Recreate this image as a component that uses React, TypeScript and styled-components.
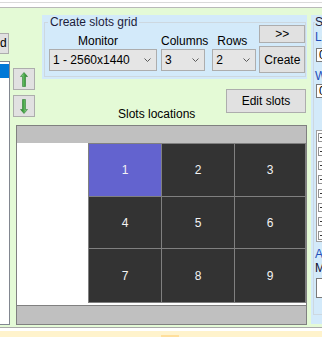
import React from "react";
import styled, { createGlobalStyle } from "styled-components";

const GlobalStyle = createGlobalStyle`
  html, body {
    margin: 0;
    padding: 0;
    background: #fff;
  }
  body {
    font-family: "Liberation Sans", Arial, sans-serif;
    font-size: 12px;
    color: #000;
  }
`;

const green = "#e4fad6";
const blue = "#d3eafa";

const Window = styled.div`
  width: 322px;
  height: 337px;
  overflow: hidden;
  background: #fff;
  display: flex;
  flex-direction: column;
`;

const TopStrip = styled.div`
  flex-shrink: 0;
  height: 4px;
  margin-top: 2px;
  border-top: 1px solid #dadada;
  border-bottom: 1px solid #b9b9b9;
`;

const Main = styled.div`
  flex-shrink: 0;
  height: 319px;
  background: ${green};
  border-bottom: 1px solid #a9a9a9;
  display: flex;
  align-items: flex-start;
  overflow: hidden;
`;

const Footer = styled.div`
  flex: 1;
  margin-top: 3px;
  background: #fff3cc;
  display: flex;
  align-items: flex-end;
`;

const FooterTab = styled.div`
  margin-left: 161px;
  width: 18px;
  height: 2px;
  background: #ffdf9c;
`;

/* ---------- left strip ---------- */

const LeftCol = styled.div`
  flex-shrink: 0;
  width: 10px;
  display: flex;
  flex-direction: column;
`;

const CutButton = styled.div`
  margin-top: 25px;
  width: 9px;
  height: 21px;
  box-sizing: border-box;
  border: 1px solid #adadad;
  border-left: none;
  background: #e1e1e1;
  line-height: 19px;
  overflow: hidden;
`;

const ListBox = styled.div`
  margin-top: 7px;
  width: 10px;
  height: 264px;
  box-sizing: border-box;
  border: 1px solid #828790;
  border-left: none;
  background: #fff;
  padding-top: 2px;
`;

const ListItem = styled.div<{ $selected?: boolean }>`
  height: 14px;
  background: ${(p) => (p.$selected ? "#0078d7" : "transparent")};
`;

/* ---------- middle ---------- */

const MiddleCol = styled.div`
  flex-shrink: 0;
  margin-left: 3px;
  width: 294px;
  display: flex;
  flex-direction: column;
`;

const Upper = styled.div`
  height: 117px;
  display: flex;
  align-items: flex-start;
`;

const ArrowCol = styled.div`
  width: 22px;
  margin-top: 60px;
  display: flex;
  flex-direction: column;
  gap: 5px;
`;

const IconButton = styled.div`
  width: 22px;
  height: 22px;
  box-sizing: border-box;
  border: 1px solid #adadad;
  background: #e1e1e1;
  display: flex;
  align-items: center;
  justify-content: center;
`;

const RightSub = styled.div`
  margin-left: 7px;
  width: 265px;
  height: 117px;
  display: flex;
  flex-direction: column;
`;

const GroupPanel = styled.div`
  margin-top: 7px;
  height: 64px;
  background: ${blue};
  padding: 0 1px 0 2px;
  box-sizing: border-box;
`;

const GroupBox = styled.fieldset`
  margin: 0;
  padding: 0;
  height: 62px;
  box-sizing: border-box;
  border: 1px solid #cdd8e0;
  min-width: 0;
`;

const Legend = styled.legend`
  margin-left: 3px;
  padding: 0 2px;
  line-height: 14px;
  color: #1c1c3a;
`;

const FieldRow = styled.div`
  display: flex;
  align-items: flex-start;
`;

const FieldCol = styled.div<{ $gap: number }>`
  margin-left: ${(p) => p.$gap}px;
  margin-top: 5px;
  display: flex;
  flex-direction: column;
`;

const FieldLabel = styled.div<{ $indent: number }>`
  padding-left: ${(p) => p.$indent}px;
  line-height: 14px;
  height: 14px;
`;

const Combo = styled.div<{ $width: number }>`
  margin-top: 1px;
  width: ${(p) => p.$width}px;
  height: 22px;
  box-sizing: border-box;
  border: 1px solid #adadad;
  background: #e5e5e5;
  display: flex;
  align-items: center;
  justify-content: space-between;
  padding: 0 5px 0 3px;
  line-height: 20px;
`;

const ButtonCol = styled.div`
  margin-left: 3px;
  margin-top: -4px;
  display: flex;
  flex-direction: column;
  gap: 3px;
`;

const Button = styled.div<{ $width: number; $height: number }>`
  width: ${(p) => p.$width}px;
  height: ${(p) => p.$height}px;
  box-sizing: border-box;
  border: 1px solid #adadad;
  background: #e1e1e1;
  display: flex;
  align-items: center;
  justify-content: center;
  white-space: nowrap;
`;

const EditRow = styled.div`
  flex: 1;
  display: flex;
  align-items: flex-start;
`;

const SectionLabel = styled.div`
  align-self: flex-end;
  margin-left: 76px;
  margin-bottom: 4px;
  line-height: 14px;
  white-space: nowrap;
`;

const EditButtonWrap = styled.div`
  margin-left: auto;
  margin-right: 1px;
  margin-top: 10px;
`;

/* ---------- slots canvas ---------- */

const GridPanel = styled.div`
  margin-left: 3px;
  width: 291px;
  height: 200px;
  box-sizing: border-box;
  border: 1px solid #808080;
  display: flex;
  flex-direction: column;
`;

const Bar = styled.div<{ $height: number; $top?: boolean }>`
  height: ${(p) => p.$height}px;
  background: #c0c0c0;
  border-top: ${(p) => (p.$top ? "1px solid #808080" : "none")};
`;

const Canvas = styled.div`
  height: 162px;
  background: #fff;
  display: flex;
  align-items: flex-start;
`;

const SlotGrid = styled.div`
  margin-left: 71px;
  display: grid;
  grid-template-columns: 72px 72px 70px;
  grid-template-rows: 52px 51px 53px;
  gap: 1px;
  padding: 1px;
  background: #808080;
`;

const Slot = styled.div<{ $active?: boolean }>`
  background: ${(p) => (p.$active ? "#6363cf" : "#333333")};
  color: #f4f4f4;
  display: flex;
  align-items: center;
  justify-content: center;
`;

/* ---------- right panel (clipped) ---------- */

const RightPanel = styled.div`
  flex-shrink: 0;
  margin-left: 4px;
  margin-top: 7px;
  width: 140px;
  height: 309px;
  background: ${blue};
  padding: 0 2px;
  box-sizing: border-box;
`;

const SideBox = styled.fieldset`
  margin: 0;
  padding: 0 0 0 1px;
  height: 300px;
  box-sizing: border-box;
  border: 1px solid #cdd8e0;
  min-width: 0;
  display: flex;
  flex-direction: column;
`;

const SideLegend = styled.legend`
  margin-left: 0;
  padding: 0;
  line-height: 14px;
  color: #1c1c3a;
`;

const SideLabel = styled.div<{ $blue?: boolean; $top: number }>`
  margin-top: ${(p) => p.$top}px;
  line-height: 14px;
  color: ${(p) => (p.$blue ? "#1f4fb8" : "#101030")};
`;

const TextBox = styled.div<{ $height: number; $top: number }>`
  margin-top: ${(p) => p.$top}px;
  margin-left: 1px;
  height: ${(p) => p.$height}px;
  box-sizing: border-box;
  border: 1px solid #7a7a7a;
  background: #fff;
  padding-left: 2px;
  line-height: ${(p) => p.$height - 2}px;
`;

const CheckList = styled.div`
  margin-top: 32px;
  margin-left: 1px;
  height: 115px;
  box-sizing: border-box;
  border: 1px solid #a0a0a0;
  background: #fff;
  padding: 2px 0 0 1px;
  display: flex;
  flex-direction: column;
  gap: 5px;
`;

const Expander = styled.div`
  width: 9px;
  height: 9px;
  box-sizing: border-box;
  border: 1px solid #919191;
  display: flex;
  align-items: center;
  justify-content: center;
  &::after {
    content: "";
    width: 5px;
    height: 1px;
    background: #333;
  }
`;

const SmallButton = styled.div`
  margin-top: 2px;
  margin-left: 7px;
  width: 40px;
  height: 14px;
  box-sizing: border-box;
  border: 1px solid #333;
  background: #e1e1e1;
`;

const Chevron = () => (
  <svg width="7" height="4" viewBox="0 0 7 4">
    <polyline points="0.5,0.5 3.5,3.5 6.5,0.5" fill="none" stroke="#5a5a5a" strokeWidth="1" />
  </svg>
);

const ArrowIcon = ({ down }: { down?: boolean }) => (
  <svg width="8" height="15" viewBox="0 0 8 15" style={{ transform: down ? "rotate(180deg)" : undefined }}>
    <defs>
      <linearGradient id={down ? "agd" : "agu"} x1="0" x2="1" y1="0" y2="0">
        <stop offset="0" stopColor="#a8e0a8" />
        <stop offset="0.5" stopColor="#4fae4f" />
        <stop offset="1" stopColor="#237a23" />
      </linearGradient>
    </defs>
    <path d="M4 0.5 L7.5 4.5 L5.5 4.5 L5.5 14.5 L2.5 14.5 L2.5 4.5 L0.5 4.5 Z" fill={`url(#${down ? "agd" : "agu"})`} stroke="#2e7d32" strokeWidth="0.6" />
  </svg>
);

export default function App() {
  const slots = [1, 2, 3, 4, 5, 6, 7, 8, 9];
  return (
    <>
      <GlobalStyle />
      <Window>
        <TopStrip />
        <Main>
          <LeftCol>
            <CutButton>d</CutButton>
            <ListBox>
              <ListItem $selected />
              <ListItem />
            </ListBox>
          </LeftCol>

          <MiddleCol>
            <Upper>
              <ArrowCol>
                <IconButton>
                  <ArrowIcon />
                </IconButton>
                <IconButton>
                  <ArrowIcon down />
                </IconButton>
              </ArrowCol>

              <RightSub>
                <GroupPanel>
                  <GroupBox>
                    <Legend>Create slots grid</Legend>
                    <FieldRow>
                      <FieldCol $gap={4}>
                        <FieldLabel $indent={29}>Monitor</FieldLabel>
                        <Combo $width={108}>
                          <span>1 - 2560x1440</span>
                          <Chevron />
                        </Combo>
                      </FieldCol>
                      <FieldCol $gap={4}>
                        <FieldLabel $indent={0}>Columns</FieldLabel>
                        <Combo $width={44}>
                          <span>3</span>
                          <Chevron />
                        </Combo>
                      </FieldCol>
                      <FieldCol $gap={4}>
                        <FieldLabel $indent={5}>Rows</FieldLabel>
                        <Combo $width={44}>
                          <span>2</span>
                          <Chevron />
                        </Combo>
                      </FieldCol>
                      <ButtonCol>
                        <Button $width={46} $height={18}>&gt;&gt;</Button>
                        <Button $width={46} $height={27}>Create</Button>
                      </ButtonCol>
                    </FieldRow>
                  </GroupBox>
                </GroupPanel>

                <EditRow>
                  <SectionLabel>Slots locations</SectionLabel>
                  <EditButtonWrap>
                    <Button $width={80} $height={24}>Edit slots</Button>
                  </EditButtonWrap>
                </EditRow>
              </RightSub>
            </Upper>

            <GridPanel>
              <Bar $height={17} />
              <Canvas>
                <SlotGrid>
                  {slots.map((n) => (
                    <Slot key={n} $active={n === 1}>
                      {n}
                    </Slot>
                  ))}
                </SlotGrid>
              </Canvas>
              <Bar $height={18} $top />
            </GridPanel>
          </MiddleCol>

          <RightPanel>
            <SideBox>
              <SideLegend>Slot settings</SideLegend>
              <SideLabel $blue $top={1}>Location</SideLabel>
              <TextBox $height={14} $top={4}>0</TextBox>
              <SideLabel $blue $top={7}>Window</SideLabel>
              <TextBox $height={14} $top={1}>0</TextBox>
              <CheckList>
                {Array.from({ length: 8 }).map((_, i) => (
                  <Expander key={i} />
                ))}
              </CheckList>
              <SideLabel $blue $top={5}>Application</SideLabel>
              <SideLabel $top={0}>Monitor</SideLabel>
              <TextBox $height={21} $top={3} />
              <SmallButton />
            </SideBox>
          </RightPanel>
        </Main>
        <Footer>
          <FooterTab />
        </Footer>
      </Window>
    </>
  );
}
